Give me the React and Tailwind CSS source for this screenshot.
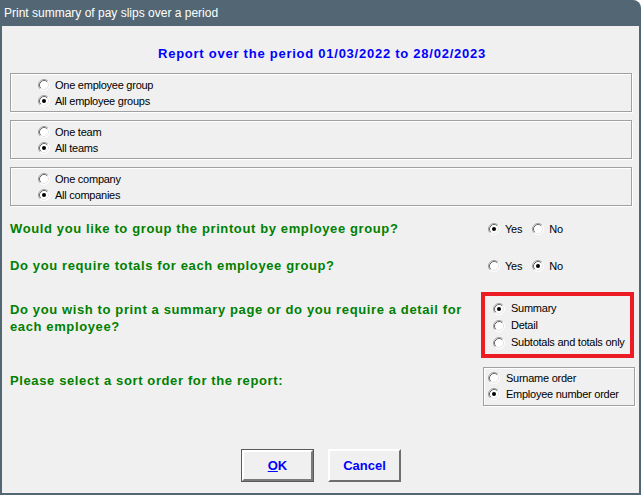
import React from 'react'

function Radio({ checked }) {
  return (
    <svg width="12" height="12" viewBox="0 0 12 12" className="shrink-0">
      <circle cx="6" cy="6" r="5.5" fill="#fff" />
      <path d="M2.11 9.89 A5.5 5.5 0 0 1 9.89 2.11" fill="none" stroke="#a0a0a0" strokeWidth="1" />
      <path d="M9.89 2.11 A5.5 5.5 0 0 1 2.11 9.89" fill="none" stroke="#ffffff" strokeWidth="1" />
      <path d="M2.82 9.18 A4.5 4.5 0 0 1 9.18 2.82" fill="none" stroke="#696969" strokeWidth="1" />
      <path d="M9.18 2.82 A4.5 4.5 0 0 1 2.82 9.18" fill="none" stroke="#e3e3e3" strokeWidth="1" />
      {checked && <circle cx="6" cy="6" r="2" fill="#000" />}
    </svg>
  )
}

function Option({ checked, label, gap = 'ml-[5px]', h = 'h-[16px]' }) {
  return (
    <div className={`flex items-center ${h}`}>
      <Radio checked={checked} />
      <span className={`${gap} text-[11px] tracking-[-0.25px] text-black leading-none whitespace-nowrap`}>{label}</span>
    </div>
  )
}

// etched frame used by the windows group boxes
const etched = 'border border-[#a0a0a0] shadow-[inset_1px_1px_0_#fff,1px_1px_0_#fff]'

function GroupBox({ first, second }) {
  return (
    <div className={`${etched} mr-[2px] pt-[3px] pb-[2px] pl-[27px]`}>
      <Option label={first} />
      <Option checked label={second} />
    </div>
  )
}

function YesNo({ yes }) {
  return (
    <div className="flex items-center pl-[7px] h-[16px] text-[11px] tracking-[-0.25px] leading-none">
      <Radio checked={yes} />
      <span className="ml-[5px]">Yes</span>
      <div className="ml-[10px]">
        <Radio checked={!yes} />
      </div>
      <span className="ml-[5px]">No</span>
    </div>
  )
}

const question = 'text-[13px] font-bold tracking-[0.62px] text-[#008000] leading-[16px] whitespace-nowrap'

export default function App() {
  return (
    <div className="w-[641px] h-[495px] flex flex-col bg-[#526773] rounded-tr-[8px] font-['Liberation_Sans',Arial,sans-serif]">
      <div className="h-[26px] shrink-0 flex items-center pl-[4px] text-[12px] text-white">
        Print summary of pay slips over a period
      </div>

      <div className="flex-1 ml-[2px] mr-[2px] mb-[2px] bg-[#f0f0f0] pl-[8px] pr-[5px] flex flex-col">
        <div className="mt-[20px] h-[16px] text-center text-[13px] font-bold tracking-[0.75px] text-[#0000ff] leading-[16px]">
          Report over the period 01/03/2022 to 28/02/2023
        </div>

        <div className="mt-[11px] flex flex-col gap-[8px]">
          <GroupBox first="One employee group" second="All employee groups" />
          <GroupBox first="One team" second="All teams" />
          <GroupBox first="One company" second="All companies" />
        </div>

        <div className="mt-[15px] flex items-center">
          <div className={`flex-1 ${question}`}>Would you like to group the printout by employee group?</div>
          <div className="w-[153px] shrink-0">
            <YesNo yes />
          </div>
        </div>

        <div className="mt-[21px] flex items-center">
          <div className={`flex-1 ${question}`}>Do you require totals for each employee group?</div>
          <div className="w-[153px] shrink-0">
            <YesNo />
          </div>
        </div>

        <div className="mt-[18px] flex items-start">
          <div className={`flex-1 pt-[9px] ${question} leading-[17px]`}>
            Do you wish to print a summary page or do you require a detail for
            <br />
            each employee?
          </div>
          <div className="w-[153px] h-[66px] shrink-0 border-4 border-[#ed1c24] pl-[8px] pt-[4px]">
            <Option checked label="Summary" h="h-[17px]" gap="ml-[6px]" />
            <Option label="Detail" h="h-[17px]" gap="ml-[6px]" />
            <Option label="Subtotals and totals only" h="h-[17px]" gap="ml-[6px]" />
          </div>
        </div>

        <div className="mt-[9px] flex items-start">
          <div className={`flex-1 pt-[6px] ${question}`}>Please select a sort order for the report:</div>
          <div className="w-[153px] shrink-0">
            <div className={`${etched} ml-[2px] w-[152px] pt-[2px] pb-[3px] pl-[4px]`}>
              <Option label="Surname order" gap="ml-[6px]" />
              <Option checked label="Employee number order" gap="ml-[6px]" />
            </div>
          </div>
        </div>

        <div className="mt-[43px] flex justify-center gap-[14px] pr-[2px]">
          <button className="w-[73px] h-[33px] border border-[#5a5a5a] bg-[#f0f0f0] p-0">
            <div className="w-full h-full border-2 border-t-white border-l-white border-b-[#7a7a7a] border-r-[#7a7a7a] flex items-center justify-center text-[13px] font-bold text-[#0000ff]">
              <span><span className="underline">O</span>K</span>
            </div>
          </button>
          <button className="w-[73px] h-[33px] border-2 border-t-white border-l-white border-b-[#6e6e6e] border-r-[#6e6e6e] bg-[#f0f0f0] flex items-center justify-center text-[13px] font-bold text-[#0000ff]">
            Cancel
          </button>
        </div>
      </div>
    </div>
  )
}
